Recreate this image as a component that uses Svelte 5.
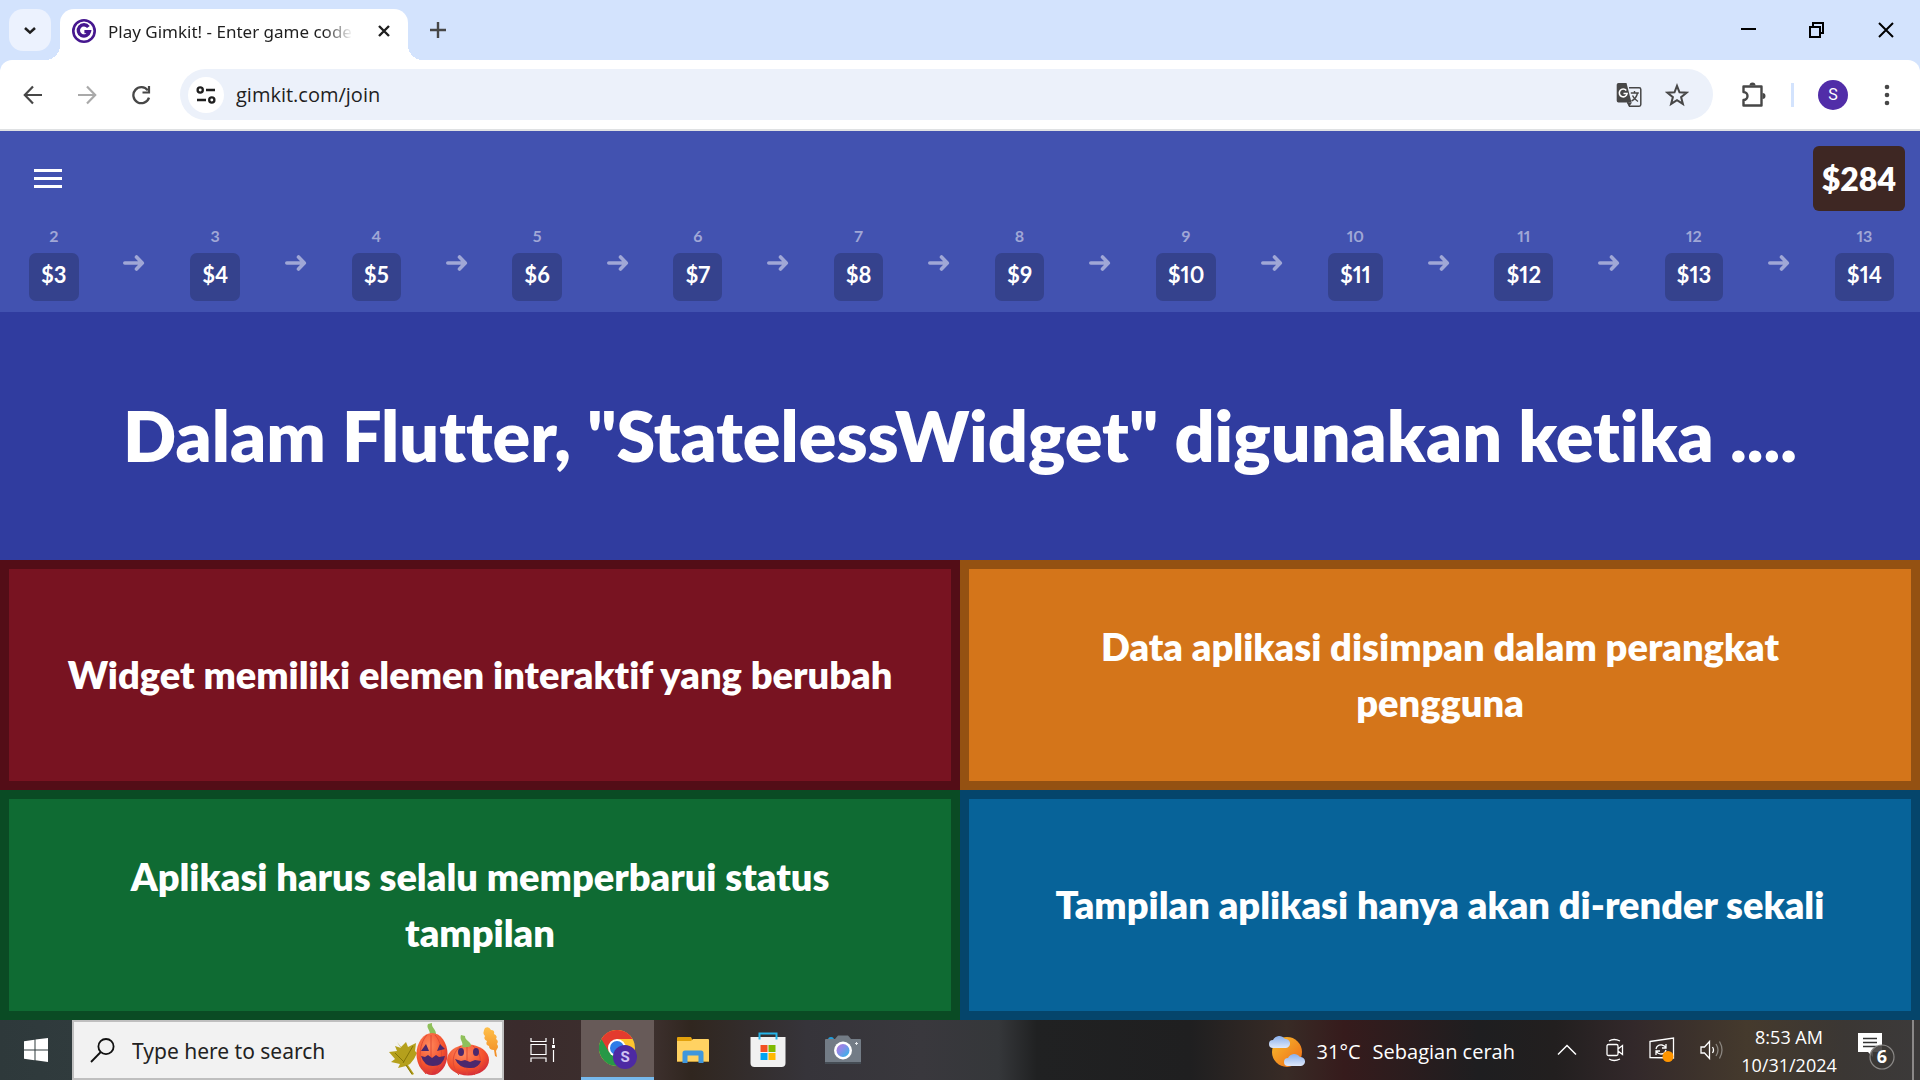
<script>
  const steps = Array.from({ length: 12 }, (_, i) => ({ level: i + 2, price: `$${i + 3}` }));

  const answers = [
    { tone: 'red', text: 'Widget memiliki elemen interaktif yang berubah' },
    { tone: 'orange', text: 'Data aplikasi disimpan dalam perangkat pengguna' },
    { tone: 'green', text: 'Aplikasi harus selalu memperbarui status tampilan' },
    { tone: 'blue', text: 'Tampilan aplikasi hanya akan di-render sekali' }
  ];

  let address = $state('gimkit.com/join');
  let search = $state('');
</script>

<div class="screen">
  <header class="tabstrip">
    <button class="tab-search" aria-label="Search tabs">
      <svg width="14" height="9" viewBox="0 0 14 9"><path d="M2 2l5 4.6L12 2" fill="none" stroke="#1f1f1f" stroke-width="2.6" /></svg>
    </button>
    <div class="tab">
      <svg class="favicon" width="24" height="24" viewBox="0 0 24 24">
        <circle cx="12" cy="12" r="10.7" fill="#fff" stroke="#46178f" stroke-width="2.6" />
        <path d="M16.4 8A5.600 5.600 0 1 0 17.400 12.600H12.400" fill="none" stroke="#46178f" stroke-width="3.400" />
      </svg>
      <span class="tab-title">Play Gimkit! - Enter game code</span>
      <button class="tab-close" aria-label="Close tab">
        <svg width="14" height="14" viewBox="0 0 14 14"><path d="M2 2l10 10M12 2L2 12" stroke="#1f1f1f" stroke-width="2.4" /></svg>
      </button>
    </div>
    <button class="new-tab" aria-label="New tab">
      <svg width="16" height="16" viewBox="0 0 16 16"><path d="M8 0v16M0 8h16" stroke="#474747" stroke-width="2.4" /></svg>
    </button>
    <div class="window-buttons">
      <button aria-label="Minimize"><svg width="16" height="16" viewBox="0 0 16 16"><path d="M1 7h15" stroke="#000" stroke-width="2" /></svg></button>
      <button aria-label="Restore"><svg width="16" height="16" viewBox="0 0 16 16"><path d="M1 5h10v10H1zM4 4V1h10v10h-3" fill="none" stroke="#000" stroke-width="2" /></svg></button>
      <button aria-label="Close"><svg width="16" height="16" viewBox="0 0 16 16"><path d="M1 1l14 14M15 1L1 15" stroke="#000" stroke-width="2" /></svg></button>
    </div>
  </header>

  <nav class="toolbar-back" aria-label="Browser">
    <div class="toolbar">
      <div class="nav-buttons">
        <button aria-label="Back"><svg width="20" height="20" viewBox="0 0 20 20"><path d="M19 10H2.5M10 1.5L1.8 10l8.2 8.5" fill="none" stroke="#474747" stroke-width="2.2" /></svg></button>
        <button aria-label="Forward"><svg width="20" height="20" viewBox="0 0 20 20"><path d="M1 10h16.5M10 1.5l8.2 8.5-8.2 8.5" fill="none" stroke="#a9a9a9" stroke-width="2.2" /></svg></button>
        <button aria-label="Reload"><svg width="20" height="20" viewBox="0 0 20 20"><path d="M16.800 5.400A8 8 0 1 0 18 12.600" fill="none" stroke="#474747" stroke-width="2.3" /><path d="M18 1v6.500h-6.500" fill="none" stroke="#474747" stroke-width="2.200" /></svg></button>
      </div>
      <div class="omnibox">
        <button class="site-info" aria-label="Site information">
          <svg width="20" height="18" viewBox="0 0 20 18" fill="none" stroke="#1f1f1f" stroke-width="2.3"><circle cx="4.2" cy="4" r="2.6" /><path d="M10 4h9M1 14h9" /><circle cx="15.8" cy="14" r="2.6" /></svg>
        </button>
        <input class="address" aria-label="Address" bind:value={address} />
        <button class="omni-button" aria-label="Translate">
          <svg width="26" height="26" viewBox="0 0 26 26">
            <path d="M13 5.8h10.200a1.600 1.600 0 0 1 1.600 1.600v15.200a1.600 1.600 0 0 1-1.600 1.600H13.500l-2-4" fill="none" stroke="#474747" stroke-width="1.500" />
            <path d="M2.500 1h8l5 19.500H2.500A1.800 1.800 0 0 1 .7 18.700V2.800A1.800 1.800 0 0 1 2.500 1z" fill="#474747" />
            <path d="M11 20.500h5l-2.700 4z" fill="#474747" />
            <path d="M10.300 8.500a3.900 3.900 0 1 0 .8 3H7.500" fill="none" stroke="#fff" stroke-width="1.600" />
            <path d="M14.800 11h8M18.500 9v2M21.500 11c-.7 3.500-3 6.500-6 8M16.500 13.500c1 2.500 3 4.500 5.500 6" fill="none" stroke="#474747" stroke-width="1.400" />
          </svg>
        </button>
        <button class="omni-button" aria-label="Bookmark">
          <svg width="24" height="24" viewBox="0 0 24 24"><path d="M12 2.800l2.500 6.500 7 .4-5.400 4.400 1.800 6.800L12 17.100l-5.900 3.800 1.800-6.800L2.500 9.700l7-.4z" fill="none" stroke="#474747" stroke-width="2" /></svg>
        </button>
      </div>
      <div class="tool-buttons">
        <button aria-label="Extensions">
          <svg width="26" height="26" viewBox="0 0 26 26"><path d="M3.500 4.500h18v19h-18v-5.500a4 4 0 0 0 0-8z" fill="none" stroke="#474747" stroke-width="2.400" stroke-linejoin="round" /><path d="M9.500 3.500a3 3 0 0 1 6 0zM22.500 11a3 3 0 0 1 0 6z" fill="#474747" /></svg>
        </button>
        <span class="divider"></span>
        <button class="profile" aria-label="Profile">S</button>
        <button aria-label="Menu"><svg width="6" height="22" viewBox="0 0 6 22" fill="#474747"><circle cx="3" cy="3" r="2.300" /><circle cx="3" cy="11" r="2.300" /><circle cx="3" cy="19" r="2.300" /></svg></button>
      </div>
    </div>
  </nav>

  <main>
    <section class="status">
      <div class="status-top">
        <button class="menu" aria-label="Open menu">
          <svg width="28" height="19" viewBox="0 0 28 19"><path d="M0 1.500h28M0 9.500h28M0 17.500h28" stroke="#fff" stroke-width="3" /></svg>
        </button>
        <div class="balance">$284</div>
      </div>
      <div class="streak">
        {#each steps as step, i}
          {#if i > 0}
            <svg class="arrow" width="22" height="16" viewBox="0 0 22 16"><path d="M1.800 8H19M13.500 2l5.800 6-5.800 6" fill="none" stroke="#a0a7d6" stroke-width="3.600" stroke-linecap="round" stroke-linejoin="round" /></svg>
          {/if}
          <div class="step">
            <span class="level">{step.level}</span>
            <span class="price">{step.price}</span>
          </div>
        {/each}
      </div>
    </section>

    <section class="question"><h1>Dalam Flutter, "StatelessWidget" digunakan ketika ....</h1></section>

    <section class="answers">
      {#each answers as answer}
        <button class="answer {answer.tone}"><span>{answer.text}</span></button>
      {/each}
    </section>
  </main>

  <footer class="taskbar">
    <button class="start" aria-label="Start">
      <svg width="24" height="24" viewBox="0 0 24 24" fill="#fff"><path d="M0 3.300l10.500-1.500v9.700H0zM11.500 1.600L24 0v11.500H11.500zM0 12.500h10.500v9.700L0 20.700zM11.500 12.500H24V24l-12.500-1.700z" /></svg>
    </button>
    <label class="search">
      <svg width="25" height="25" viewBox="0 0 25 25" fill="none" stroke="#111" stroke-width="1.800"><circle cx="16" cy="8.600" r="7.600" /><path d="M10.800 14L1 24" /></svg>
      <input aria-label="Search" placeholder="Type here to search" bind:value={search} />
      <svg class="pumpkins" width="112" height="54" viewBox="0 0 112 54">
        <defs>
          <radialGradient id="pumpkin" cx=".4" cy=".3" r=".8"><stop offset="0" stop-color="#ff8b5e" /><stop offset=".6" stop-color="#f4512d" /><stop offset="1" stop-color="#c8203f" /></radialGradient>
          <linearGradient id="oak" x2="0" y2="1"><stop offset="0" stop-color="#ffc04a" /><stop offset="1" stop-color="#f08a24" /></linearGradient>
        </defs>
        <path d="M9 19l4 5 5-5 2 5 8-4-1 8 2 2-3 6-4 5-2 1 6 9-2 1-6-9-8 2 2-4-9-2 4-3-6-7 8-1-2-5 6 2z" fill="#b5a01c" />
        <path d="M25 23L15 40M7 30l9 9M18 42l6 9" stroke="#857407" fill="none" />
        <path d="M42 12C42 6 38 5 40 1l4-1c-1 5 5 6 4 13z" fill="#8fc05a" />
        <ellipse cx="44" cy="31" rx="15.500" ry="21" fill="url(#pumpkin)" />
        <path d="M39 12c-9 9-9 31-1 39M47 12c9 9 8 31 1 39M43 12v39" fill="none" stroke="#e04a34" />
        <ellipse cx="80" cy="37" rx="21" ry="15.500" fill="url(#pumpkin)" />
        <path d="M74 24c2-5-3-7-1-12l4 1c0 5 6 5 6 10q-4 2-9 1z" fill="#8fc05a" />
        <path d="M73 23c-10 7-10 21-2 29M85 23c10 7 9 21 1 29M79 24v28" fill="none" stroke="#e04a34" />
        <path d="M33 28l5-7 3 7zM49 28l3-7 5 5zM33 33l4 1 3-2 4 3 4-3 3 2 6-1q-2 10-12 10-9 0-12-10z" fill="#4b286d" />
        <ellipse cx="73" cy="29" rx="3" ry="4" fill="#4b286d" /><ellipse cx="88" cy="29" rx="3" ry="4" fill="#4b286d" />
        <path d="M67 36l6 2 4-1 5 2 5-2 6 1q-3 8-12 7-10 0-14-9z" fill="#4b286d" />
        <path d="M97 5q4-2 6 2 4 0 3 4 4 2 2 5 3 2 1 5 2 3 0 5l-1 2 1 6-2-1-1-6q-5 0-5-4-4-1-2-5-4-2-2-5-3-3 0-8z" fill="url(#oak)" />
      </svg>
    </label>

    <div class="apps">
      <button aria-label="Task view">
        <svg width="26" height="24" viewBox="0 0 26 24" fill="none" stroke="#fff" stroke-width="1.200"><path d="M1 0v3.500h15V0M1 6.500h15v10H1zM1 24v-4h15v4M23.500 0v6M23.500 12v12" /><path d="M22 7h3v3h-3z" fill="#fff" stroke="none" /></svg>
      </button>
      <button class="active" aria-label="Chrome">
        <svg width="38" height="40" viewBox="0 0 38 40">
          <circle cx="18" cy="18" r="18" fill="#ffc52f" />
          <path d="M18 18L2.400 9A18 18 0 0 0 18 36l6-12z" fill="#279847" />
          <path d="M18 9h15.600A18 18 0 0 0 2.400 9L10 22z" fill="#e33b2e" />
          <circle cx="18" cy="18" r="9" fill="#fff" /><circle cx="18" cy="18" r="7" fill="#2d7be8" />
          <circle cx="26" cy="27" r="12" fill="#4d2aa3" /><text x="26" y="32" text-anchor="middle">S</text>
        </svg>
      </button>
      <button aria-label="File Explorer">
        <svg width="32" height="28" viewBox="0 0 32 28"><path d="M0 2q0-1 1-1h13l1.500 3H32v21.500H0z" fill="#e2a10c" /><path d="M0 5h14l2-2h15q1 0 1 1v21.500H0z" fill="#ffd262" /><path d="M5.500 27V17a2.500 2.500 0 0 1 2.500-2.500h16a2.500 2.500 0 0 1 2.500 2.500v10h-5v-7.500h-11V27z" fill="#3f97dd" /></svg>
      </button>
      <button aria-label="Microsoft Store">
        <svg width="36" height="36" viewBox="0 0 36 36"><path d="M.5 5h35v26a4 4 0 0 1-4 4h-27a4 4 0 0 1-4-4z" fill="#f1f1f1" /><path d="M9.500 7.500V1.500h17v6" fill="none" stroke="#25b4e8" stroke-width="2" /><path d="M10.500 13h7v7h-7z" fill="#f25022" /><path d="M18.500 13h7v7h-7z" fill="#7fba00" /><path d="M10.500 21h7v7h-7z" fill="#00a4ef" /><path d="M18.500 21h7v7h-7z" fill="#ffb900" /></svg>
      </button>
      <button aria-label="Camera">
        <svg width="36" height="30" viewBox="0 0 36 30">
          <defs><linearGradient id="lens" x2="1" y2="1"><stop offset="0" stop-color="#b779de" /><stop offset=".4" stop-color="#8b8be8" /><stop offset="1" stop-color="#25bce8" /></linearGradient></defs>
          <path d="M3 5q0-3 3-3t3 3z" fill="#209fdd" /><path d="M0 5q0-1 1-1h9l3-3.500h10L26 4h9q1 0 1 1v23H0z" fill="#737c86" /><path d="M0 27h36v2H0z" fill="#454c54" /><circle cx="18" cy="15.500" r="9" fill="#fff" /><circle cx="18" cy="15.500" r="6.500" fill="url(#lens)" /><path d="M31.500 7v3M30 8.500h3" stroke="#e5e8eb" />
        </svg>
      </button>
    </div>

    <div class="tray">
      <button class="weather">
        <svg width="36" height="34" viewBox="0 0 36 34">
          <defs>
            <linearGradient id="sun" x2="1" y2="1"><stop offset="0" stop-color="#f8bd2e" /><stop offset="1" stop-color="#ee6a16" /></linearGradient>
            <linearGradient id="cloud" x2="0" y2="1"><stop offset="0" stop-color="#8ab0ec" /><stop offset="1" stop-color="#dfe9fb" /></linearGradient>
          </defs>
          <circle cx="18" cy="18" r="15" fill="url(#sun)" />
          <path d="M4 14a4 4 0 0 1 0-8 7 7 0 0 1 12-1 4.500 4.500 0 0 1 1 9z" fill="url(#cloud)" />
          <path d="M19 32a4 4 0 0 1 0-8 7 7 0 0 1 12-1 4.500 4.500 0 0 1 1 9z" fill="url(#cloud)" />
        </svg>
        <span>31°C</span><span>Sebagian cerah</span>
      </button>
      <div class="tray-icons">
        <button class="chevron" aria-label="Show hidden icons"><svg width="20" height="12" viewBox="0 0 20 12"><path d="M1 10.500L10 1.500l9 9" fill="none" stroke="#fff" stroke-width="1.500" /></svg></button>
        <button aria-label="Meet now"><svg width="18" height="24" viewBox="0 0 18 24" fill="none" stroke="#fff" stroke-width="1.300"><path d="M3 3q5-3 11 0M3 21q5 3 11 0M2.500 6.500h8q1.500 0 1.500 1.500v8q0 1.500-1.500 1.500h-8Q1 17.500 1 16V8q0-1.500 1.500-1.500zM12 11l4.500-3.500v9L12 13" /></svg></button>
        <button aria-label="Updates available"><svg width="26" height="26" viewBox="0 0 26 26" fill="none" stroke="#fff" stroke-width="1.300"><path d="M1 4.500L24.500 1v20L1 20.500zM7 12q1-4.500 6-4 3 .5 4 3M17 7v4h-4M17 13q-1 4-5 4-3 0-5-3M7 18v-4h4" /><circle cx="19" cy="19.500" r="5.500" fill="#ff9500" stroke="none" /></svg></button>
        <button aria-label="Volume"><svg width="24" height="20" viewBox="0 0 24 20" fill="none" stroke="#fff" stroke-width="1.300"><path d="M1 7h3.500L9.500 1.500v17L4.500 13H1zM12.500 7q2 3 0 6" /><path d="M16 4q4 6 0 12M19.500 1.500q5 8.500 0 17" stroke="#8a857f" /></svg></button>
      </div>
      <button class="clock"><span>8:53 AM</span><span>10/31/2024</span></button>
      <button class="notice" aria-label="6 notifications">
        <svg width="37" height="37" viewBox="0 0 37 37"><path d="M0 0h24v19h-9v5l-5-5H0z" fill="#fff" /><path d="M5 5.500h14M5 9.500h14M5 13.500h14" stroke="#333" stroke-width="1.300" /><circle cx="24" cy="24" r="12" fill="#3b3836" fill-opacity=".88" stroke="#8b8987" stroke-width="1.200" /><text x="24" y="30" text-anchor="middle">6</text></svg>
      </button>
      <span class="desktop-edge"></span>
    </div>
  </footer>
</div>

<style>
  :global(body) { margin: 0; }
  * { box-sizing: border-box; }
  button, input { font: inherit; color: inherit; border: 0; padding: 0; margin: 0; background: none; min-width: 0; outline: 0; }
  button { display: flex; align-items: center; justify-content: center; cursor: pointer; }
  svg { display: block; flex: none; }

  .screen { min-height: 100vh; display: flex; flex-direction: column; font-family: "Open Sans", "Noto Sans", sans-serif; }

  .tabstrip { display: flex; align-items: center; height: 60px; background: #d3e3fd; padding-left: 9px; }
  .tab-search { width: 42px; height: 42px; border-radius: 14px; background: #ecf2fe; }
  .tab { position: relative; align-self: flex-end; display: flex; align-items: center; width: 348px; height: 51px; margin-left: 9px; padding: 0 17px 8px 12px; background: #fff; border-radius: 14px 14px 0 0; }
  .tab::before, .tab::after { content: ""; position: absolute; bottom: 0; width: 15px; height: 15px; }
  .tab::before { right: 100%; background: radial-gradient(circle at 0 0, transparent 15px, #fff 15px); }
  .tab::after { left: 100%; background: radial-gradient(circle at 100% 0, transparent 15px, #fff 15px); }
  .tab-title { flex: 1; margin: 0 24px 0 12px; padding-top: 2px; overflow: hidden; white-space: nowrap; font-family: "Noto Sans", sans-serif; font-size: 17px; line-height: 24px; color: #1f1f1f; mask-image: linear-gradient(90deg, #000 88%, transparent); }
  .new-tab { margin-left: 22px; width: 16px; height: 42px; }
  .window-buttons { display: flex; margin-left: auto; }
  .window-buttons button { width: 69px; height: 60px; }

  .toolbar-back { background: #d3e3fd; }
  .toolbar { display: flex; align-items: center; height: 71px; border-bottom: 2px solid #dfe1e3; background: #fff; border-radius: 12px 12px 0 0; }
  .nav-buttons { display: flex; gap: 34px; padding: 0 29px 0 23px; }
  .omnibox { flex: 1; display: flex; align-items: center; height: 51px; padding: 0 24px 0 8px; background: #ecf1fa; border-radius: 26px; }
  .site-info { width: 36px; height: 36px; border-radius: 50%; background: #fff; }
  .address { flex: 1; margin-left: 12px; font-size: 20px; line-height: 28px; color: #1f1f1f; }
  .omni-button { margin-left: 23px; }
  .tool-buttons { display: flex; align-items: center; padding: 0 30px 0 27px; }
  .divider { width: 3px; height: 24px; margin: 0 24px 0 25px; background: #d3e3fd; }
  .profile { width: 30px; height: 30px; margin-right: 36px; border-radius: 50%; background: #512da8; color: #fff; font-family: Roboto, sans-serif; font-size: 16px; }

  main { flex: 1; display: flex; flex-direction: column; font-family: Lato, sans-serif; font-weight: 700; font-variant-ligatures: none; color: #fff; background: #303c9f; }
  .status { background: #4252b0; height: 181px; }
  .status-top { display: flex; align-items: center; justify-content: space-between; padding: 15px 15px 0 34px; }
  .balance { height: 65px; padding: 0 9px; border-radius: 6px; background: #3e2723; font-size: 32px; font-weight: 800; line-height: 65px; }
  .streak { display: flex; align-items: center; justify-content: space-between; padding: 14px 26px 0 29px; font-variant-numeric: proportional-nums; }
  .step { display: flex; flex-direction: column; align-items: center; }
  .level { font-size: 16px; line-height: 22px; margin-bottom: 6px; color: #a0a7d6; }
  .price { height: 48px; padding: 0 12px; border-radius: 7px; background: #35428d; font-size: 22px; line-height: 44px; }

  .question { flex: 1; display: flex; align-items: center; justify-content: center; padding: 20px; text-align: center; }
  h1 { margin: 0; padding-bottom: 2px; font-size: 70px; font-weight: 800; line-height: 84px; }

  .answers { display: grid; grid-template-columns: 1fr 1fr; grid-auto-rows: minmax(230px, auto); }
  .answer { border: 9px solid; padding: 0 56px 2px; font-size: 38px; font-weight: 800; line-height: 56px; font-variant-ligatures: none; }
  .answer span { color: #fff; }
  .red { background: #781321; border-color: #530d17; }
  .orange { background: #d4751a; border-color: #945112; }
  .green { background: #0f6b33; border-color: #0a4b24; }
  .blue { background: #076399; border-color: #05456b; }

  .taskbar { display: flex; height: 60px; color: #fff; background: linear-gradient(90deg, #2e393b 0, #303b3d 4%, #3a2b2c 27%, #3d302e 34%, #30261f 36%, #36343a 42%, #39383d 48%, #35373a 52%, #202122 54%, #1f1f20 62%, #382b26 67%, #361b1c 70%, #1e1e20 77%, #221f1f 81%, #32282a 85%, #453a2d 91%, #3b3734 96%, #3c3a3a 100%); }
  .start { width: 72px; }
  .search { display: flex; align-items: center; width: 432px; padding: 0 2px 0 16px; border: 2px solid #bfbfbf; background: #f2f2f2; }
  .search input { flex: 1; margin-left: 17px; padding-top: 2px; font-family: "Noto Sans", sans-serif; font-size: 21px; line-height: 30px; color: #222; }
  .search input::placeholder { color: #222; opacity: 1; }
  .apps { display: flex; gap: 2px; padding-left: 2px; }
  .apps button { width: 73px; border: solid transparent; border-width: 3px 0; }
  .apps .active { background: #675a58; border-top-color: #675a58; border-bottom-color: #76b9ed; }
  .apps text { font: 700 15px Roboto, sans-serif; fill: #cfc2f2; }
  .tray { display: flex; margin-left: auto; }
  .weather { gap: 12px; padding-top: 2px; font-size: 20px; }
  .tray-icons { display: flex; align-items: center; gap: 25px; margin-left: 42px; }
  .chevron { margin-right: 4px; }
  .clock { flex-direction: column; width: 134px; padding: 2px 4px 0 0; font-size: 18px; line-height: 28px; }
  .notice { padding-top: 2px; }
  .notice text { font: 700 18px "Open Sans", sans-serif; fill: #fff; }
  .desktop-edge { width: 8px; margin-left: 17px; border-left: 2px solid #8b8888; }
</style>
